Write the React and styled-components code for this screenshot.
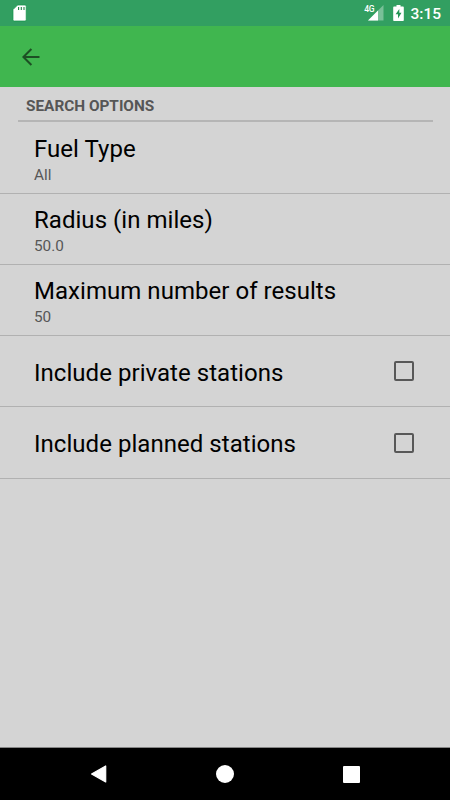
import React from 'react'
import styled, { createGlobalStyle } from 'styled-components'

const options = [
  { title: 'Fuel Type', value: 'All' },
  { title: 'Radius (in miles)', value: '50.0' },
  { title: 'Maximum number of results', value: '50' },
  { title: 'Include private stations', checkbox: true },
  { title: 'Include planned stations', checkbox: true },
]

function StatusBar() {
  return (
    <StatusWrapper>
      <svg width="16" height="18" viewBox="0 0 16 18">
        <path d="M5.6 1H13Q14.2 1 14.2 2.2V15.8Q14.2 17 13 17H2.2Q1 17 1 15.8V5.6Z" fill="#fff" stroke="#129447" strokeWidth=".7" />
        <path d="M6.6 3v3M9.3 3v3M12 3v3" stroke="#1f8746" strokeWidth="1.1" />
      </svg>
      <StatusGroup>
        <Network>4G</Network>
        <Signal width="16" height="16" viewBox="0 0 16 16">
          <path d="M0 15.5L15.5 0V15.5Z" fill="#fff" fillOpacity=".35" />
          <path d="M0 15.5L10 5.5V15.5Z" fill="#fff" />
        </Signal>
        <Battery width="11" height="16" viewBox="0 0 11 16">
          <path d="M3.5 0h4v1.6H10q.8 0 .8.8v12.8q0 .8-.8.8H1q-.8 0-.8-.8V2.4q0-.8.8-.8h2.5z" fill="#fff" />
          <path d="M6.3 4L2.6 9.3H5V13.4L8.5 7.8H6.3z" fill="#239455" />
        </Battery>
        <Clock>3:15</Clock>
      </StatusGroup>
    </StatusWrapper>
  )
}

function Option({ option }) {
  return (
    <Row>
      <Label>
        <Title>{option.title}</Title>
        {option.value && <Value>{option.value}</Value>}
      </Label>
      {option.checkbox && <Checkbox role="checkbox" aria-checked="false" aria-label={option.title} />}
    </Row>
  )
}

function App() {
  return (
    <Screen>
      <GlobalStyle />
      <StatusBar />
      <Toolbar>
        <svg width="18" height="18" viewBox="0 0 18 18" fill="none" stroke="#1d4f24" strokeWidth="2">
          <path d="M17.5 9H1.5M9.4 1L1.4 9L9.4 17" />
        </svg>
      </Toolbar>
      <Content>
        <Heading>SEARCH OPTIONS</Heading>
        {options.map(option => <Option key={option.title} option={option} />)}
      </Content>
      <NavBar>
        <svg width="17" height="18" viewBox="0 0 17 18">
          <path d="M1.6 9L15.7 1V17Z" fill="#fff" stroke="#fff" strokeWidth="1.2" strokeLinejoin="round" />
        </svg>
        <Home />
        <Recents />
      </NavBar>
    </Screen>
  )
}

const GlobalStyle = createGlobalStyle`
  body {
    margin: 0;
    font-family: Roboto, sans-serif;
  }
  * {
    box-sizing: border-box;
  }
  svg {
    display: block;
  }
`

const Screen = styled.div`
  display: flex;
  flex-direction: column;
  width: 450px;
  height: 800px;
  background: #d4d4d4;
  overflow: hidden;
`

const StatusWrapper = styled.header`
  display: flex;
  flex: none;
  justify-content: space-between;
  align-items: flex-start;
  height: 26px;
  padding: 4px 9px 0 12px;
  background: #329f61;
`

const StatusGroup = styled.div`
  display: flex;
  align-items: flex-start;
  padding-top: 1px;
  color: #fff;
`

const Network = styled.span`
  font-size: 8.5px;
  line-height: 9px;
  font-weight: 500;
  letter-spacing: -0.3px;
`

const Signal = styled.svg`
  margin-left: -6px;
`

const Battery = styled.svg`
  margin-left: 9px;
`

const Clock = styled.span`
  margin-left: 6.3px;
  font-size: 15.5px;
  line-height: 18px;
  font-weight: 500;
`

const Toolbar = styled.div`
  display: flex;
  flex: none;
  align-items: center;
  height: 61px;
  padding-left: 22px;
  background: #40b64f;
`

const Content = styled.main`
  flex: 1;
`

const Heading = styled.h2`
  height: 35px;
  margin: 0 17px 0.7px 18px;
  padding: 9px 8px 0;
  border-bottom: 2px solid #b5b5b5;
  color: #565656;
  font-size: 15.35px;
  line-height: 20px;
  font-weight: 700;
`

const Row = styled.div`
  display: flex;
  justify-content: space-between;
  align-items: center;
  height: 71.2px;
  padding: 0 36px 0 34px;
  border-bottom: 1px solid #b1b1b1;
`

const Label = styled.div`
  padding-top: 3px;
`

const Title = styled.div`
  color: #000;
  font-size: 24px;
  line-height: 30px;
  letter-spacing: 0.04px;
`

const Value = styled.div`
  color: #575757;
  font-size: 15.3px;
  line-height: 18px;
  margin-top: 2px;
  padding-bottom: 1px;
`

const Checkbox = styled.span`
  width: 20px;
  height: 20px;
  border: 2px solid #585858;
  border-radius: 2px;
`

const NavBar = styled.nav`
  display: flex;
  flex: none;
  justify-content: space-between;
  align-items: center;
  height: 53px;
  padding: 0 90px;
  border-top: 1px solid #858585;
  background: #000;
`

const Home = styled.span`
  width: 18px;
  height: 18px;
  border-radius: 50%;
  background: #fff;
`

const Recents = styled.span`
  width: 17px;
  height: 17px;
  border-radius: 1px;
  background: #fff;
`

export default App
